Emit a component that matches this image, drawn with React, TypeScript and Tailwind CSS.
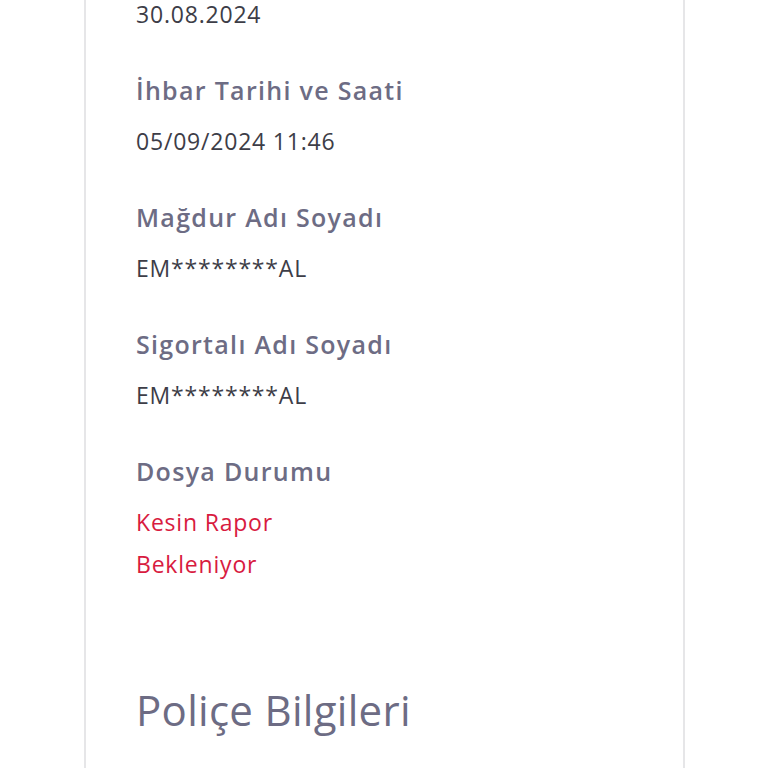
const fields = [
  { label: "İhbar Tarihi ve Saati", value: "05/09/2024 11:46" },
  { label: "Mağdur Adı Soyadı", value: "EM********AL" },
  { label: "Sigortalı Adı Soyadı", value: "EM********AL" },
];

export default function App() {
  return (
    <div className="w-[768px] h-[768px] overflow-hidden bg-white font-['Open_Sans','Noto_Sans',sans-serif]">
      <div className="ml-[84px] w-[601px] min-h-[800px] border-x-2 border-[#e6e6e8] pl-[50px] pr-8">
        <p className="text-[23px] leading-[28px] tracking-[0.8px] text-[#3d3d47]">30.08.2024</p>

        {fields.map((f, i) => (
          <div key={f.label}>
            <h3
              className={
                (i === 0 ? "mt-[46px] " : "mt-[39px] ") +
                "text-[25px] leading-[32px] tracking-[1.3px] font-semibold text-[#6d6c84]"
              }
            >
              {f.label}
            </h3>
            <p className="mt-[14px] text-[23px] leading-[42px] tracking-[0.8px] text-[#3d3d47]">{f.value}</p>
          </div>
        ))}

        <h3 className="mt-[39px] text-[25px] leading-[32px] tracking-[1.3px] font-semibold text-[#6d6c84]">
          Dosya Durumu
        </h3>
        <p className="mt-[14px] text-[23px] leading-[42px] tracking-[0.8px] text-[#d81b3f]">
          Kesin Rapor
          <br />
          Bekleniyor
        </p>

        <h2 className="mt-[99px] text-[42px] leading-[52px] tracking-[0.3px] font-medium text-[#6d6c84]">
          Poliçe Bilgileri
        </h2>
      </div>
    </div>
  );
}
